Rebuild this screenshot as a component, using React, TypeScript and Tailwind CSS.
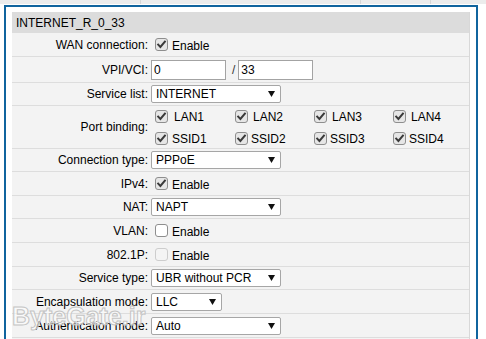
import React from "react";

const font = { fontFamily: '"Liberation Sans", Arial, sans-serif' };

function Check({ state }: { state: "on" | "off" | "disabled" }) {
  if (state === "on") {
    return (
      <div className="w-[13px] h-[13px] shrink-0 rounded-[3px] border border-[#8e8e8e] bg-[#e6e6e6] flex items-center justify-center">
        <svg width="11" height="11" viewBox="0 0 11 11">
          <path d="M2.2 5.6 L4.4 7.9 L8.9 2.6" fill="none" stroke="#3a3a3a" strokeWidth="2" strokeLinecap="square" />
        </svg>
      </div>
    );
  }
  if (state === "off") {
    return <div className="w-[13px] h-[13px] shrink-0 rounded-[3px] border border-[#8e8e8e] bg-white" />;
  }
  return <div className="w-[13px] h-[13px] shrink-0 rounded-[3px] border border-[#cdcdcd] bg-[#f4f4f4]" />;
}

function Select({ value, w }: { value: string; w: string }) {
  return (
    <div className={`${w} h-[18px] border border-[#a6a6a6] rounded-[2px] bg-white flex items-center justify-between pl-[4px] pr-[4px]`}>
      <span className="text-[12px] leading-[14px] text-black">{value}</span>
      <svg width="7" height="6" viewBox="0 0 7 6" className="mr-[1px]">
        <path d="M0 0 H7 L3.5 6 Z" fill="#111" />
      </svg>
    </div>
  );
}

function Row({ label, h, children }: { label: string; h: string; children?: React.ReactNode }) {
  return (
    <div className={`flex border-b border-[#dddddd] bg-[#f3f3f3] ${h}`}>
      <div className="w-[136px] shrink-0 flex items-center justify-end text-[12px] leading-[14px] text-black whitespace-nowrap">
        {label}
      </div>
      <div className="flex items-center pl-[3px]">{children}</div>
    </div>
  );
}

function Enable({ state }: { state: "on" | "off" | "disabled" }) {
  return (
    <div className="flex items-center pl-[4px]">
      <Check state={state} />
      <span className="ml-[4px] mt-[3px] text-[12px] leading-[14px] text-black">Enable</span>
    </div>
  );
}

function PortItem({ name, gap }: { name: string; gap: string }) {
  return (
    <div className="flex items-center pl-[4px]">
      <Check state="on" />
      <span className={`${gap} mt-[2px] text-[12px] leading-[14px] text-black`}>{name}</span>
    </div>
  );
}

export default function App() {
  return (
    <div className="w-[486px] h-[339px] overflow-hidden bg-white relative" style={font}>
      <div className="h-[4px] bg-[#ececec] flex">
        <div className="w-[141px] border-r border-[#d6d6d6]" />
        <div className="w-[220px] border-r border-[#d6d6d6]" />
        <div className="w-[70px] border-r border-[#d6d6d6]" />
      </div>
      <div className="mt-[1px] ml-[4px] w-[474px] border-2 border-b-0 border-[#10649e] pt-[5px] px-[6px] h-[400px]">
        <div className="border-r border-[#d8d8d8]">
          <div className="h-[21px] bg-[#dcdcdc] flex items-center pl-[4px] text-[12px] leading-[14px] text-black">
            INTERNET_R_0_33
          </div>
          <Row label="WAN connection:" h="h-[24px]">
            <Enable state="on" />
          </Row>
          <Row label="VPI/VCI:" h="h-[26px]">
            <div className="w-[75px] h-[20px] border border-[#a3a3a3] bg-white flex items-center pl-[2px] text-[12px] leading-[14px]">0</div>
            <span className="ml-[6px] mr-[3px] text-[12px] leading-[14px] text-[#333]">/</span>
            <div className="w-[75px] h-[20px] border border-[#a3a3a3] bg-white flex items-center pl-[2px] text-[12px] leading-[14px]">33</div>
          </Row>
          <Row label="Service list:" h="h-[23px]">
            <Select value="INTERNET" w="w-[130px]" />
          </Row>
          <Row label="Port binding:" h="h-[43px]">
            <div className="grid grid-cols-[80px_79px_79px_79px] gap-y-[6px]">
              <PortItem name="LAN1" gap="ml-[6px]" />
              <PortItem name="LAN2" gap="ml-[5px]" />
              <PortItem name="LAN3" gap="ml-[5px]" />
              <PortItem name="LAN4" gap="ml-[5px]" />
              <PortItem name="SSID1" gap="ml-[4px]" />
              <PortItem name="SSID2" gap="ml-[3px]" />
              <PortItem name="SSID3" gap="ml-[3px]" />
              <PortItem name="SSID4" gap="ml-[3px]" />
            </div>
          </Row>
          <Row label="Connection type:" h="h-[23px]">
            <Select value="PPPoE" w="w-[130px]" />
          </Row>
          <Row label="IPv4:" h="h-[24px]">
            <Enable state="on" />
          </Row>
          <Row label="NAT:" h="h-[23px]">
            <Select value="NAPT" w="w-[130px]" />
          </Row>
          <Row label="VLAN:" h="h-[24px]">
            <Enable state="off" />
          </Row>
          <Row label="802.1P:" h="h-[24px]">
            <Enable state="disabled" />
          </Row>
          <Row label="Service type:" h="h-[23px]">
            <Select value="UBR without PCR" w="w-[130px]" />
          </Row>
          <Row label="Encapsulation mode:" h="h-[24px]">
            <Select value="LLC" w="w-[71px]" />
          </Row>
          <Row label="Authentication mode:" h="h-[24px]">
            <Select value="Auto" w="w-[130px]" />
          </Row>
          <div className="flex h-[24px] bg-[#f3f3f3]">
            <div className="w-[136px] shrink-0" />
            <div className="pl-[3px] pt-[1px]">
              <div className="w-[130px] h-[18px] border border-[#a6a6a6] rounded-[2px] bg-white" />
            </div>
          </div>
        </div>
      </div>
      <div
        className="absolute left-[12px] top-[304px] text-[25px] leading-[25px] font-bold pointer-events-none"
        style={{
          fontFamily: '"Liberation Sans", Arial, sans-serif',
          color: "rgba(255,255,255,0.55)",
          WebkitTextStroke: "1px #c4c4c4",
        }}
      >
        ByteGate.ir
      </div>
    </div>
  );
}
